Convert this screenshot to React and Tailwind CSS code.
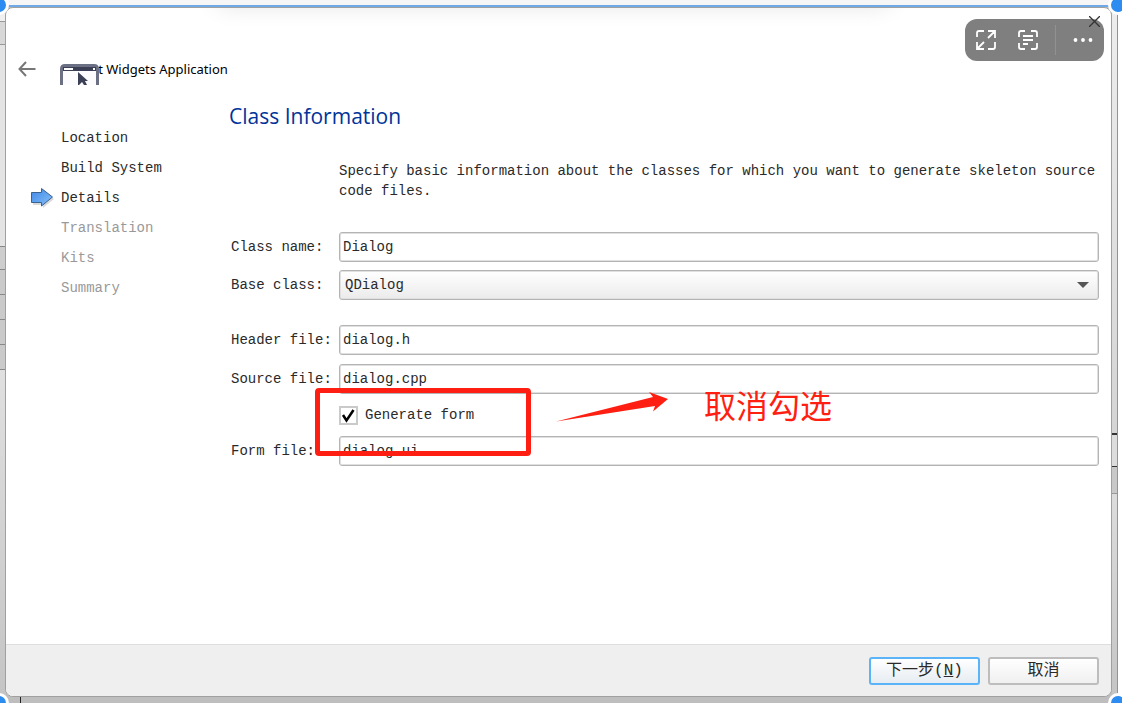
import { useState } from 'react';

const steps = [
  { name: 'Location', done: true },
  { name: 'Build System', done: true },
  { name: 'Details', done: true, current: true },
  { name: 'Translation' },
  { name: 'Kits' },
  { name: 'Summary' },
];

function Field({ id, label, value, onChange }) {
  return (
    <div className="flex items-center">
      <label htmlFor={id} className="w-[108px] shrink-0 whitespace-nowrap">{label}</label>
      <input
        id={id}
        type="text"
        value={value}
        onChange={(e) => onChange(e.target.value)}
        className="h-[30px] min-w-0 flex-1 rounded-[3px] border border-[#b4b4b4] bg-white px-[3px] shadow-[inset_0_0_0_1px_#e0e0e0] outline-none"
      />
    </div>
  );
}

function StepArrow() {
  return (
    <svg width="24" height="20" viewBox="0 0 24 20" className="shrink-0" aria-hidden="true">
      <defs>
        <linearGradient id="step" x1="0" y1="0" x2="1" y2="1">
          <stop offset="0" stopColor="#3f86e6" />
          <stop offset="0.5" stopColor="#62a4f0" />
          <stop offset="1" stopColor="#8cc0f8" />
        </linearGradient>
      </defs>
      <path d="M3 6H13V2.5L24 11 13 20V17H3Z" fill="#000" opacity="0.15" />
      <path d="M1.500 4.500H11.500V0.500L22.500 9 11.500 18V14.500H1.500Z" fill="url(#step)" stroke="#3a628e" />
    </svg>
  );
}

function WidgetIcon() {
  return (
    <svg width="39" height="21" viewBox="0 0 39 21" className="relative z-10 shrink-0" aria-hidden="true">
      <path d="M0 21V5Q0 0 5 0H34Q39 0 39 5V21Z" fill="#6b7084" />
      <path d="M3 6H36V21H3Z" fill="#fcfcfe" />
      <path d="M3 3H36V7H3Z" fill="#3c4057" />
      <path d="M4 4H13V6H4ZM33 4H35V6H33Z" fill="#fff" />
      <path d="M18 8V21H19L22 18 24 21H27L25 17H28Z" fill="#3c4057" />
    </svg>
  );
}

function CaptureBar() {
  return (
    <div className="absolute top-[11px] right-[7px] flex h-[42px] w-[139px] items-center rounded-xl bg-[#7f7f7f] text-white">
      <button type="button" aria-label="Expand" className="ml-[11px]">
        <svg width="20" height="20" viewBox="0 0 20 20" fill="none" stroke="currentColor" strokeWidth="1.800">
          <path d="M1 7V3Q1 1 3 1H8M12 1H19V8M19 12V17Q19 19 17 19H12M8 19H1V12M1 19L8 12M12 8L19 1" />
        </svg>
      </button>
      <button type="button" aria-label="Extract text" className="ml-[22px]">
        <svg width="20" height="20" viewBox="0 0 20 20" fill="none" stroke="currentColor" strokeWidth="1.800">
          <path d="M1 7V3Q1 1 3 1H7M13 1H17Q19 1 19 3V7M19 13V17Q19 19 17 19H13M7 19H3Q1 19 1 17V13M5 6H15M5 10H15M5 14H10" />
        </svg>
      </button>
      <span className="ml-[17px] h-[30px] w-px bg-[#919191]" />
      <button type="button" aria-label="More" className="ml-[17px]">
        <svg width="20" height="4" viewBox="0 0 20 4" fill="currentColor">
          <circle cx="2.500" cy="2" r="1.900" />
          <circle cx="10" cy="2" r="1.900" />
          <circle cx="17.500" cy="2" r="1.900" />
        </svg>
      </button>
    </div>
  );
}

function Annotation() {
  return (
    <>
      <div className="pointer-events-none absolute -top-1.5 left-[84px] h-[68px] w-[216px] rounded-[4px] border-[5px] border-[#ff1f12]" />
      <svg width="114" height="32" viewBox="0 0 114 32" className="pointer-events-none absolute -top-1 left-[325px]" aria-hidden="true">
        <path d="M0 31.500L97 7 93 2 112 9 97 21.500 99 16Z" fill="#ff1f12" />
      </svg>
      <p className="pointer-events-none absolute -top-2.5 left-[473px] font-['Noto_Sans_CJK_SC',sans-serif] text-[32px] leading-10 whitespace-nowrap text-[#ff1f12]">取消勾选</p>
    </>
  );
}

// edges of the windows lying behind the dialog
function LeftEdge() {
  return (
    <div className="flex w-1.5 shrink-0 flex-col bg-[#e2e2e2]">
      <div className="h-[22px] border-b border-[#999] bg-[#f0f0f0]" />
      <div className="h-[23px] border-b border-[#999] bg-[#d8d8d8]" />
      <div className="h-[202px] border-b border-[#888] bg-[#e4e4e4]" />
      <div className="h-[23px] border-b border-[#888] bg-[#cdcdcd]" />
      <div className="h-[25px] border-b border-[#888] bg-[#cacaca]" />
      <div className="h-[25px] border-b border-[#888] bg-[#cacaca]" />
      <div className="h-[25px] border-b border-[#888] bg-[#cacaca]" />
      <div className="h-[25px] border-b border-[#888] bg-[#cacaca]" />
      <div className="flex-1 bg-linear-to-b from-[#e0e0e0] to-[#c4c4c4]" />
    </div>
  );
}

function RightEdge() {
  return (
    <div className="flex w-1.5 shrink-0 flex-col border-r border-[#5b9fe8] bg-[#d8d8d8]">
      <div className="h-[435px] border-b-2 border-[#333] bg-linear-to-b from-[#eee] to-[#d4d4d4]" />
      <div className="h-8 border-b border-[#333] bg-[#dcdcdc]" />
      <div className="h-[27px] border-b border-[#999] bg-[#c8c8c8]" />
      <div className="flex-1 bg-linear-to-b from-[#dcdcdc] to-[#c4c4c4]" />
    </div>
  );
}

export default function App() {
  const [className, setClassName] = useState('Dialog');
  const [header, setHeader] = useState('dialog.h');
  const [source, setSource] = useState('dialog.cpp');
  const [form, setForm] = useState('dialog.ui');
  const [generate, setGenerate] = useState(true);

  return (
    <div className="relative flex min-h-screen overflow-hidden bg-white font-['Liberation_Mono','Noto_Sans_CJK_SC',monospace] text-sm text-[#2a2a2a]">
      <LeftEdge />
      <div className="flex min-w-0 flex-1 flex-col bg-[#bebebe]">
        <div className="h-[7px] shrink-0 border-b-2 border-[#6fa9e6] bg-[#f6f6f6]" />
        <div className="relative -ml-px flex flex-1 flex-col overflow-hidden rounded-lg border border-[#a0a0a0] bg-white">
          <div className="pointer-events-none absolute -top-6 right-[220px] left-[210px] h-4 rounded-lg shadow-[0_4px_24px_rgba(0,0,0,0.14)]" />
          <header className="flex items-center pt-[50px]">
            <button type="button" aria-label="Back" className="ml-3 text-[#777]">
              <svg width="18" height="16" viewBox="0 0 18 16" fill="none" stroke="currentColor" strokeWidth="2">
                <path d="M8 1L1.500 8 8 15M1.500 8H17.500" />
              </svg>
            </button>
            <div className="ml-6 flex h-[21px] items-center">
              <div className="pt-3"><WidgetIcon /></div>
              <h1 className="-ml-[11px] font-['Noto_Sans','Open_Sans',sans-serif] text-[13px] leading-5 text-black">Qt Widgets Application</h1>
            </div>
          </header>
          <CaptureBar />
          <button type="button" aria-label="Close" className="absolute top-2 right-[11px] text-[#333]">
            <svg width="11" height="11" viewBox="0 0 11 11" stroke="currentColor" strokeWidth="1.300">
              <path d="M0 0L11 11M11 0L0 11" />
            </svg>
          </button>

          <div className="flex flex-1 pt-[23px] pr-3">
            <nav className="w-[223px] shrink-0 pt-[21px] pl-6">
              <ol>
                {steps.map((step) => (
                  <li key={step.name} className="flex h-[30px] items-center" aria-current={step.current ? 'step' : undefined}>
                    <span className="w-[31px] shrink-0">{step.current && <StepArrow />}</span>
                    <span className={step.done ? 'text-[#2a2a2a]' : 'text-[#999]'}>{step.name}</span>
                  </li>
                ))}
              </ol>
            </nav>
            <main className="min-w-0 flex-1">
              <h2 className="font-['Open_Sans',sans-serif] text-[21px] leading-7 text-[#003399]">Class Information</h2>
              <form className="mt-[31px] pl-0.5" onSubmit={(e) => e.preventDefault()}>
                <p className="-mr-2 pl-[108px] leading-5">
                  Specify basic information about the classes for which you want to generate skeleton source code files.
                </p>
                <div className="mt-[31px] flex flex-col gap-2">
                  <Field id="class-name" label="Class name:" value={className} onChange={setClassName} />
                  <div className="flex items-center">
                    <label htmlFor="base-class" className="w-[108px] shrink-0">Base class:</label>
                    <div className="relative flex-1">
                      <select id="base-class" className="block h-[30px] w-full appearance-none rounded-[3px] border border-[#b4b4b4] bg-linear-to-b from-white to-[#ebebeb] px-[5px] shadow-[inset_0_0_0_1px_#e0e0e0] outline-none">
                        <option>QDialog</option>
                        <option>QMainWindow</option>
                        <option>QWidget</option>
                      </select>
                      <svg width="12" height="6" viewBox="0 0 12 6" className="pointer-events-none absolute top-3 right-2.5" fill="#555" aria-hidden="true">
                        <path d="M0 0H12L6 6Z" />
                      </svg>
                    </div>
                  </div>
                </div>
                <div className="mt-[25px] flex flex-col gap-[9px]">
                  <Field id="header-file" label="Header file:" value={header} onChange={setHeader} />
                  <Field id="source-file" label="Source file:" value={source} onChange={setSource} />
                </div>
                <div className="relative flex h-[42px] items-center pl-[108px]">
                  <span className="relative flex">
                    <input
                      id="generate"
                      type="checkbox"
                      checked={generate}
                      onChange={(e) => setGenerate(e.target.checked)}
                      className="h-[19px] w-[19px] appearance-none border-2 border-[#cacaca] bg-white"
                    />
                    {generate && (
                      <svg width="19" height="19" viewBox="0 0 19 19" className="pointer-events-none absolute inset-0" fill="none" stroke="#000" strokeWidth="2.500" aria-hidden="true">
                        <path d="M4 9L7.500 14.500 14.500 4" />
                      </svg>
                    )}
                  </span>
                  <label htmlFor="generate" className="ml-[7px]">Generate form</label>
                  <Annotation />
                </div>
                <Field id="form-file" label="Form file:" value={form} onChange={setForm} />
              </form>
            </main>
          </div>

          <footer className="flex h-[52px] items-center justify-end gap-2 border-t border-[#dedede] bg-[#efefef] pr-3 text-base">
            <button type="button" className="h-7 w-[111px] rounded-[3px] border-2 border-[#5bb4f8] bg-linear-to-b from-white to-[#e6ecf2] leading-6">
              下一步(<u>N</u>)
            </button>
            <button type="button" className="h-7 w-[111px] rounded-[3px] border-2 border-[#bdbdbd] bg-linear-to-b from-white to-[#f0f0f0] leading-6">
              取消
            </button>
          </footer>
        </div>
        <div className="h-1.5 shrink-0 pl-3.5">
          <div className="h-full w-px bg-[#222]" />
        </div>
      </div>
      <RightEdge />
      <div className="w-1 shrink-0" />

      {/* selection handles */}
      <span className="absolute -top-[5px] -left-[11px] size-5 rounded-full border-[3px] border-white bg-[#2d8cf0]" />
      <span className="absolute -top-[5px] -right-1.5 size-5 rounded-full border-[3px] border-white bg-[#2d8cf0]" />
      <span className="absolute -bottom-2.5 -left-[11px] size-5 rounded-full border-[3px] border-white bg-[#2d8cf0]" />
      <span className="absolute -right-1.5 -bottom-2.5 size-5 rounded-full border-[3px] border-white bg-[#2d8cf0]" />
    </div>
  );
}
